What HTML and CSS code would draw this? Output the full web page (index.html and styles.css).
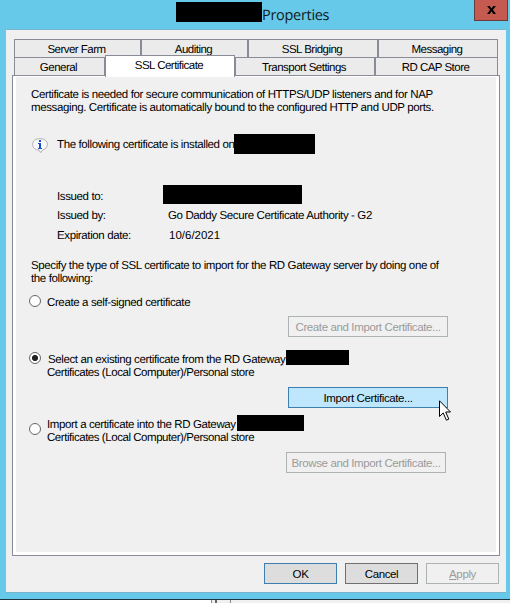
FILE: index.html
```html
<!DOCTYPE html>
<html lang="en">
<head>
<meta charset="utf-8">
<title>Properties</title>
<link rel="stylesheet" href="styles.css">
</head>
<body>
<div class="window">
  <header class="titlebar">
    <span class="redact redact-title"></span><h1>Properties</h1>
    <button class="close" aria-label="Close"><svg width="9" height="8" viewBox="0 0 10 9"><path d="M0 0H3L5 2.7L7 0H10L6.6 4.3L10 9H7L5 6L3 9H0L3.4 4.3Z"/></svg></button>
  </header>
  <main class="client">
    <nav class="tabs">
      <div class="row row-top"><span>Server Farm</span><span>Auditing</span><span>SSL Bridging</span><span>Messaging</span></div>
      <div class="row row-front"><span>General</span><span class="active">SSL Certificate</span><span>Transport Settings</span><span>RD CAP Store</span></div>
    </nav>
    <section class="panel">
      <p class="intro">Certificate is needed for secure communication of HTTPS/UDP listeners and for NAP<br>messaging. Certificate is automatically bound to the configured HTTP and UDP ports.</p>
      <div class="info">
        <svg width="16" height="16" viewBox="0 0 16 16"><path d="M8 .6C12.300 .6 15.400 3 15.400 6.400C15.400 9.300 13 11.400 10.500 12L8.800 14.600L7 12.200C3.300 12 .6 9.700 .6 6.400C.6 3 3.700 .6 8 .6Z" fill="#f8f8f8" stroke="#b0b0b0"/><path d="M7 2h2v2H7zM6 5h3v5h1v1H6v-1h1V6H6z" fill="#1c4fd0"/></svg>
        <span class="status">The following certificate is installed on</span><span class="redact redact-host"></span>
      </div>
      <dl class="details">
        <dt class="issued">Issued to:</dt><dd class="flush"><span class="redact redact-subject"></span></dd>
        <dt>Issued by:</dt><dd>Go Daddy Secure Certificate Authority - G2</dd>
        <dt>Expiration date:</dt><dd class="date">10/6/2021</dd>
      </dl>
      <p class="specify">Specify the type of SSL certificate to import for the RD Gateway server by doing one of<br>the following:</p>
      <div class="option option-create"><i class="radio"></i><span class="single">Create a self-signed certificate</span></div>
      <button class="btn wide disabled">Create and Import Certificate...</button>
      <div class="option option-select"><i class="radio checked"></i><div class="label"><div class="line"><span>Select an existing certificate from the RD Gateway</span><span class="redact redact-select"></span></div><div class="line store">Certificates (Local Computer)/Personal store</div></div></div>
      <button class="btn wide hot">Import Certificate...
        <svg class="cursor" width="12" height="21" viewBox="0 0 12 21"><path d="M.5 .8V16.500L4.200 12.900L7.400 20.200L9.800 19.100L6.700 12H11.500Z" fill="#fff" stroke="#000"/></svg>
      </button>
      <div class="option option-import"><i class="radio"></i><div class="label"><div class="line"><span>Import a certificate into the RD Gateway</span><span class="redact redact-import"></span></div><div class="line store">Certificates (Local Computer)/Personal store</div></div></div>
      <button class="btn wide disabled browse">Browse and Import Certificate...</button>
    </section>
    <footer class="actions"><button class="btn default">OK</button><button class="btn">Cancel</button><button class="btn disabled"><u>A</u>pply</button></footer>
  </main>
</div>
<div class="behind"><span class="white"></span><span class="splitter"></span><span class="gutter"></span></div>
</body>
</html>
```

FILE: styles.css
```css
* { box-sizing: border-box; }
body { margin: 0; width: 510px; height: 603px; overflow: hidden; background: #f0f0f0; color: #000; font: 11.5px/13px "Liberation Sans", Arial, sans-serif; letter-spacing: -.38px; text-rendering: geometricPrecision; white-space: nowrap; }
p, dl, dd, h1 { margin: 0; }
button { font: inherit; letter-spacing: inherit; padding: 0; }
svg { display: block; }
.window { height: 600px; background: #66c9e9; border-bottom: 1px solid #1c3440; padding: 0 4px 6px 6px; }
.titlebar { height: 29px; display: flex; padding: 2px 0 0 170px; }
h1 { font: 14.5px/27px "Open Sans", "Noto Sans", sans-serif; letter-spacing: -.3px; color: #101c20; }
.redact { display: block; flex: none; background: #000; }
.redact-title { width: 86px; height: 20px; }
.close { width: 34px; height: 21px; margin: -2px -2px 0 auto; background: #c45a50; border: 1px solid #663c3c; border-top: 0; display: grid; place-items: center; }
.client { height: 564px; width: 500px; background: #f0f0f0; border-top: 1px solid #76b5cb; border-bottom: 1px solid #76b5cb; padding: 9px 6px 0; }
.tabs { padding: 0 2px; height: 36px; letter-spacing: -.52px; }
.row { display: grid; grid-template-rows: 18px; height: 18px; }
.row-top { grid-template-columns: 127px 107px 130px 120px; }
.row-front { grid-template-columns: 91px 130px 140px 123px; }
.row span { border: 1px solid #898c96; border-bottom: 0; background: #ebebeb; text-align: center; line-height: 20px; padding-right: 2px; }
.row .active { position: relative; z-index: 1; height: 22px; margin-top: -2px; background: #fff; line-height: 20px; }
.panel { height: 481px; width: 488px; border: 1px solid #898c96; background: #f0f0f0; box-shadow: inset 3px 0 #fff, inset -3px 0 #fff, inset 0 1px #fff, inset 0 -3px #fff; padding: 13px 3px 0 18px; }
.info { display: flex; align-items: center; height: 20px; margin: 19px 0 31px 1px; }
.info svg { margin: 3px 9px 0 0; }
.redact-host { width: 81px; height: 20px; }
.status { width: 177px; padding-top: 2px; }
.details { display: grid; grid-template-columns: 106px auto; grid-template-rows: 19px 22px 18px; align-items: center; padding-left: 26px; height: 59px; }
.details dt, .details dd { padding-top: 2px; }
.details .issued { padding-top: 5px; }
.details dd { padding-left: 5px; }
.details dd.date { padding-left: 6px; letter-spacing: 0; }
.details .flush { padding: 0; }
.redact-subject { width: 139px; height: 19px; }
.specify { margin-top: 16px; }
.option { display: flex; margin-left: -2px; }
.radio { width: 12px; height: 12px; flex: none; border: 1px solid #666; border-radius: 50%; background: #fff; margin-right: 6px; }
.checked { background: radial-gradient(circle at center, #222 0 2.7px, #fff 3.4px); }
.option-create { height: 21px; margin-top: 9px; }
.single { margin-top: 2px; }
.btn { display: block; height: 21px; width: 73px; border: 1px solid #707070; background: #ddd; text-align: center; line-height: 17px; padding-top: 2px; color: #000; }
.wide { width: 160px; margin-left: 257px; }
.disabled { border-color: #adb2b5; background: #f0f0f0; color: #9b9b9b; }
.hot { position: relative; border-color: #3c7fb1; background: #bee6fd; }
.default { border-color: #3c7fb1; }
.option-select { height: 37px; margin-top: 13px; }
.option-select .radio { margin-top: 2px; }
.line { display: flex; height: 13px; }
.store { letter-spacing: -.45px; padding-top: 1px; }
.option-select .line:first-child { height: 15px; margin-bottom: 1px; }
.option-select .line:first-child span:first-child { padding: 4px 0 0 1px; width: 239px; }
.redact-select { width: 63px; height: 15px; }
.option-import { height: 37px; margin-top: 7px; }
.option-import .radio { margin-top: 8px; }
.option-import .line:first-child { height: 16px; }
.option-import .line:first-child span:first-child { padding-top: 4px; width: 190px; }
.redact-import { width: 67px; height: 16px; }
.browse { margin-left: 255px; }
.cursor { position: absolute; left: 150px; top: 12px; z-index: 2; overflow: visible; }
.actions { display: flex; justify-content: flex-end; gap: 8px; margin: 7px 1px 0 0; }
.behind { height: 3px; display: flex; }
.white { width: 211px; background: #fff; }
.splitter { width: 6px; border-left: 1px solid #888; border-right: 2px solid #666; background: #eee; }
.gutter { width: 14px; border-right: 1px solid #888; }
```
